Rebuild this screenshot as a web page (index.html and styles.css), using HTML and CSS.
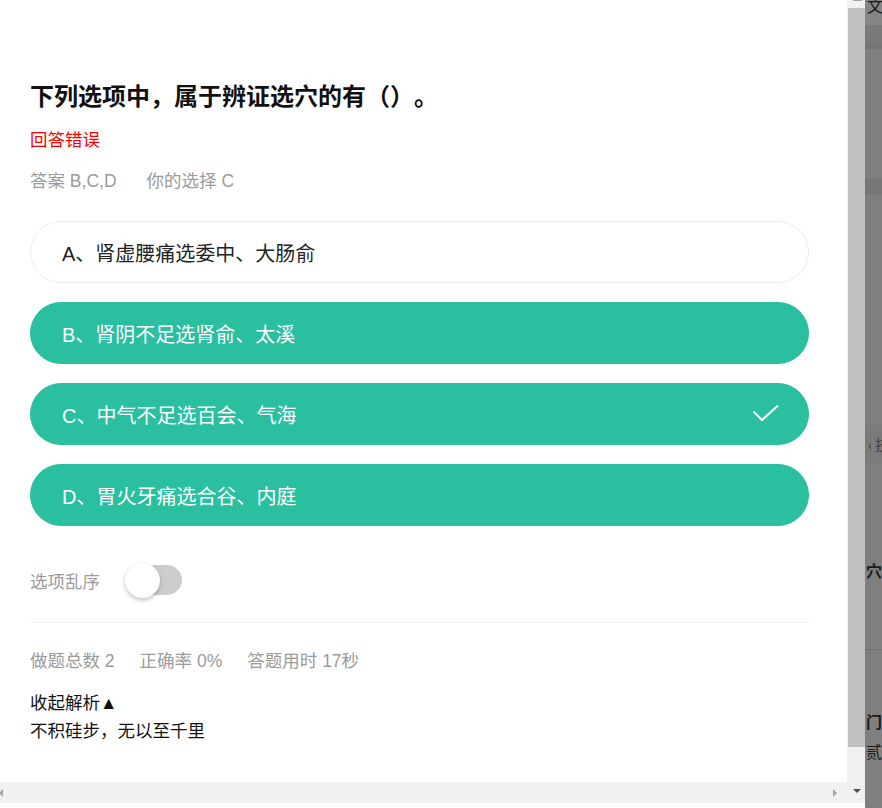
FILE: index.html
```html
<!DOCTYPE html>
<html lang="zh-CN">
<head>
  <meta charset="UTF-8" />
  <meta name="viewport" content="width=device-width, initial-scale=1.0" />
  <title>答题解析</title>
  <link rel="stylesheet" href="styles.css">
</head>
<body>
  <div class="screen">
    <div class="window">
      <div class="window-body">
        <div class="main">
          <div class="content">
            <h1 class="title">下列选项中，属于辨证选穴的有（）。</h1>
            <div class="result">回答错误</div>
            <div class="answer">
              <span>答案 B,C,D</span>
              <span>你的选择 C</span>
            </div>

            <div class="options">
              <div class="option">A、肾虚腰痛选委中、大肠俞</div>
              <div class="option active">B、肾阴不足选肾俞、太溪</div>
              <div class="option active">
                <span>C、中气不足选百会、气海</span>
                <svg class="check" width="28" height="20" viewBox="0 0 28 20">
                  <polyline points="1.5,7.5 10,16 26,1.5" fill="none" stroke="#fff" stroke-width="2.2" />
                </svg>
              </div>
              <div class="option active">D、胃火牙痛选合谷、内庭</div>
            </div>

            <div class="shuffle">
              <span>选项乱序</span>
              <div class="switch">
                <div class="switch-track"></div>
                <div class="switch-knob"></div>
              </div>
            </div>

            <div class="stats">
              <span>做题总数 2</span>
              <span>正确率 0%</span>
              <span>答题用时 17秒</span>
            </div>

            <div class="fold">收起解析▲</div>
            <div class="analysis">不积硅步，无以至千里</div>
          </div>
          <div class="hbar">
            <span class="arrow arrow-left"></span>
            <span class="arrow arrow-right"></span>
          </div>
        </div>
        <div class="vbar">
          <div class="vbar-top"></div>
          <div class="vbar-thumb"></div>
          <div class="vbar-rest"><span class="arrow arrow-down"></span></div>
        </div>
      </div>
    </div>

    <div class="backdrop">
      <div class="bd bd-top">文(</div>
      <div class="bd bd-dark1"></div>
      <div class="bd bd-line1"></div>
      <div class="bd bd-gap1"></div>
      <div class="bd bd-band"></div>
      <div class="bd bd-gap2"></div>
      <div class="bd bd-tech">‹ 技</div>
      <div class="bd bd-gap3"></div>
      <div class="bd bd-txt">穴位</div>
      <div class="bd bd-gap4"></div>
      <div class="bd bd-line2"></div>
      <div class="bd bd-gap5"></div>
      <div class="bd bd-txt">门诊</div>
      <div class="bd bd-txt bd-last">贰</div>
    </div>
  </div>
</body>
</html>
```

FILE: styles.css
```css
:root {
  --teal: #29bf9f;
  --grey-text: #9b9b9b;
  --bar: #f1f1f1;
}

* {
  box-sizing: border-box;
}

body {
  margin: 0;
  overflow: hidden;
  background: #fff;
  font-family: "Liberation Sans", "Noto Sans CJK SC", sans-serif;
  color: #111;
  text-spacing-trim: space-all;
}

.screen {
  display: flex;
  height: 808px;
}

.window {
  width: 865px;
  height: 808px;
  padding-bottom: 5px;
  background: #fff;
}

.window-body {
  display: flex;
  height: 803px;
}

.main {
  width: 847px;
  display: flex;
  flex-direction: column;
}

.content {
  flex: 1;
  overflow: hidden;
  padding: 80px 38px 0 30px;
}

.title {
  margin: 0;
  font-size: 24px;
  line-height: 34px;
  font-weight: bold;
  color: #111;
}

.result {
  margin-top: 13px;
  font-size: 17.5px;
  line-height: 26px;
  color: #ff0000;
}

.answer {
  margin-top: 15px;
  display: flex;
  gap: 30px;
  font-size: 17.5px;
  line-height: 26px;
  color: var(--grey-text);
}

.options {
  margin-top: 27px;
  display: flex;
  flex-direction: column;
  gap: 19px;
}

.option {
  height: 62px;
  border: 1px solid #ededed;
  border-radius: 31px;
  padding: 0 28px 0 31px;
  display: flex;
  align-items: center;
  justify-content: space-between;
  font-size: 20px;
  color: #222;
}

.option.active {
  background: var(--teal);
  border-color: var(--teal);
  color: #fff;
}

.check {
  display: block;
}

.shuffle {
  margin-top: 36px;
  height: 36px;
  display: flex;
  align-items: center;
  gap: 25px;
  font-size: 17.5px;
  color: var(--grey-text);
}

.switch {
  position: relative;
  width: 57px;
  height: 36px;
}

.switch-track {
  position: absolute;
  left: 5px;
  top: 3px;
  width: 52px;
  height: 30px;
  border-radius: 15px;
  background: #cdcdcd;
}

.switch-knob {
  position: absolute;
  left: 0;
  top: 1px;
  width: 35px;
  height: 35px;
  border-radius: 50%;
  background: #fff;
  box-shadow: 0 2px 4px rgba(0, 0, 0, 0.25);
}

.stats {
  margin-top: 24px;
  border-top: 1px solid #eeeeee;
  padding-top: 25px;
  display: flex;
  gap: 25px;
  font-size: 17.5px;
  line-height: 26px;
  color: var(--grey-text);
}

.fold {
  margin-top: 15px;
  font-size: 17.5px;
  line-height: 28px;
  color: #111;
}

.analysis {
  font-size: 17.5px;
  line-height: 28px;
  color: #111;
}

/* scrollbars */
.hbar {
  height: 21px;
  background: var(--bar);
  display: flex;
  align-items: center;
  justify-content: space-between;
  padding: 0 10px 0 0;
}

.vbar {
  width: 18px;
  background: var(--bar);
  display: flex;
  flex-direction: column;
}

.vbar-top {
  height: 8px;
  display: flex;
  justify-content: center;
}

.vbar-top::before {
  content: "";
  width: 9px;
  height: 1px;
  margin-left: 2px;
  background: #a3a3a3;
}

.vbar-thumb {
  height: 739px;
  margin-left: 1px;
  background: #c1c1c1;
}

.vbar-rest {
  flex: 1;
  display: flex;
  justify-content: center;
  padding-top: 42px;
}

.arrow {
  width: 0;
  height: 0;
  border-style: solid;
}

.arrow-left {
  border-width: 4.5px 4px 4.5px 0;
  border-color: transparent #a3a3a3 transparent transparent;
  margin-left: -1px;
}

.arrow-right {
  border-width: 4.5px 0 4.5px 4px;
  border-color: transparent transparent transparent #a3a3a3;
}

.arrow-down {
  border-width: 4px 4px 0 4px;
  border-color: #505050 transparent transparent transparent;
  margin-left: 2px;
}

/* page behind the dialog */
.backdrop {
  flex: 1;
  background: #7f7f7f;
  overflow: hidden;
  display: flex;
  flex-direction: column;
}

.bd {
  white-space: nowrap;
  overflow: hidden;
  font-family: "Noto Sans CJK SC", sans-serif;
  font-size: 16px;
  color: #1a1a1a;
}

.bd-top {
  height: 28px;
  line-height: 16px;
  margin-top: -3px;
  padding-left: 2px;
  background: #858585;
}

.bd-dark1 { height: 18px; background: #7a7a7a; }
.bd-line1 { height: 6px; background: #767676; }
.bd-gap1 { height: 130px; }
.bd-band { height: 16px; background: #777777; }
.bd-gap2 { height: 230px; }

.bd-tech {
  height: 38px;
  line-height: 38px;
  background: #7a7a7a;
  color: #3c3c3c;
  font-size: 14px;
  padding-left: 3px;
}

.bd-gap3 { height: 92px; }

.bd-txt {
  height: 30px;
  line-height: 30px;
  font-weight: bold;
  padding-left: 1px;
}

.bd-gap4 { height: 64px; }
.bd-line2 { height: 1px; background: #707070; }
.bd-gap5 { height: 56px; }
.bd-last { font-weight: normal; }
```
